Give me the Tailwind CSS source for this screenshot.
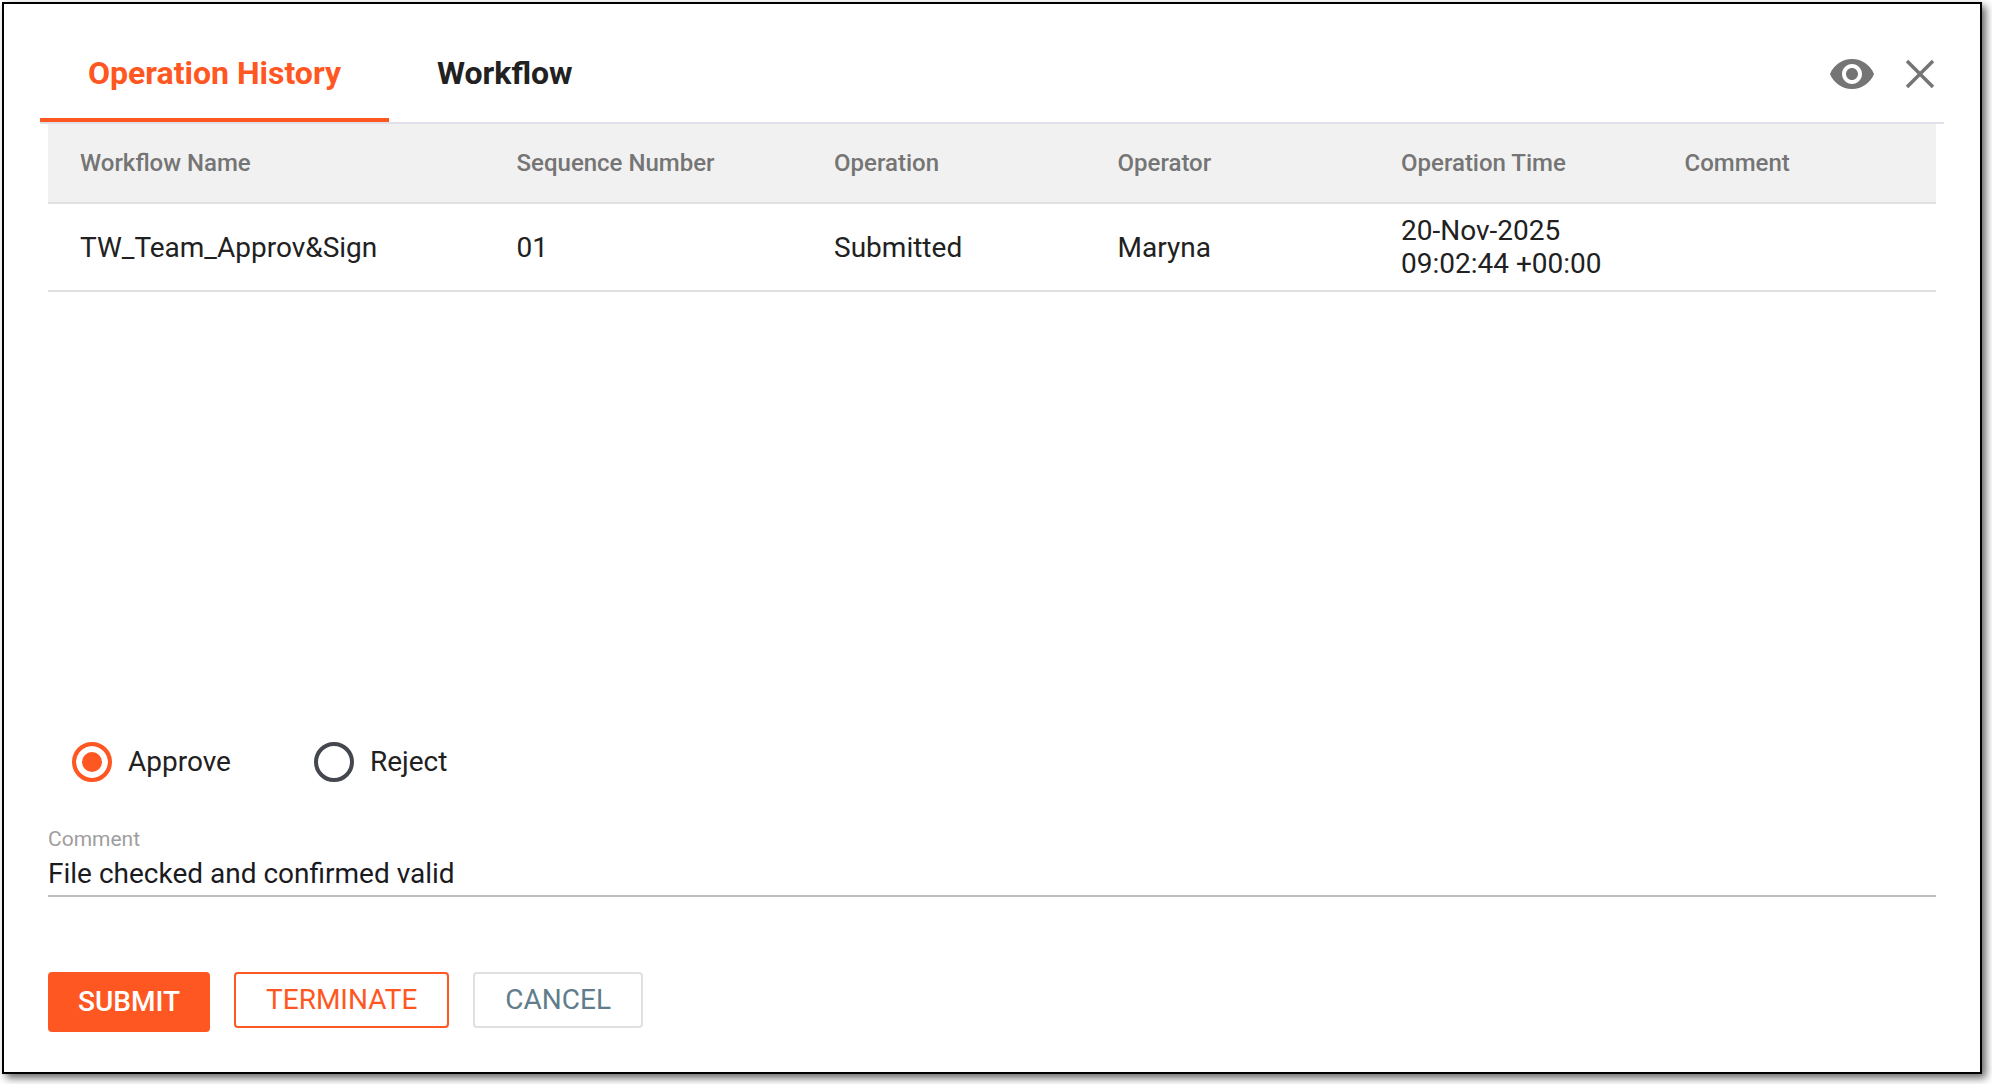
<!DOCTYPE html>
<html lang="en">
<head>
<meta charset="utf-8">
<meta name="viewport" content="width=device-width, initial-scale=1">
<title>Operation History</title>
<script src="https://cdn.jsdelivr.net/npm/@tailwindcss/browser@4"></script>
</head>
<body class="bg-white font-[Roboto,sans-serif] text-[#212121]">
<div class="flex min-h-screen flex-col pt-0.5 pr-2.5 pb-2.5 pl-0.5">
  <main class="flex flex-1 flex-col border-2 border-black bg-white px-9 pt-6 pb-10 shadow-[4px_4px_8px_rgba(0,0,0,0.6)]">
    <header class="flex items-stretch justify-between border-b-2 border-[#e0e0ea]">
      <nav role="tablist" class="flex">
        <button type="button" role="tab" aria-selected="true" class="h-[94px] border-b-4 border-[#ff5722] px-12 text-[32px] font-bold text-[#ff5722]">Operation History</button>
        <button type="button" role="tab" aria-selected="false" class="h-[94px] border-b-4 border-transparent px-12 text-[32px] font-bold">Workflow</button>
      </nav>
      <div class="flex items-center gap-7 pr-0.5 pb-0.5 text-[#757575]">
        <button type="button" aria-label="Preview">
          <svg class="size-12" viewBox="0 0 24 24" fill="currentColor"><path d="M12 4.5C7 4.500 2.730 7.610 1 12c1.730 4.390 6 7.500 11 7.500s9.270-3.110 11-7.500c-1.730-4.390-6-7.500-11-7.500zM12 17c-2.760 0-5-2.240-5-5s2.240-5 5-5 5 2.240 5 5-2.240 5-5 5zm0-8c-1.660 0-3 1.340-3 3s1.340 3 3 3 3-1.340 3-3-1.340-3-3-3z"/></svg>
        </button>
        <button type="button" aria-label="Close" class="pr-1.5">
          <svg class="size-8" viewBox="0 0 32 32" fill="none" stroke="currentColor" stroke-width="3.500"><path d="M3 3l26 26M29 3l-26 26"/></svg>
        </button>
      </div>
    </header>

    <section class="flex flex-1 flex-col px-2">
      <table class="w-full table-fixed text-left">
        <colgroup>
          <col class="w-[23.1%]"><col class="w-[16.8%]"><col class="w-[15%]"><col class="w-[15%]"><col class="w-[15%]"><col class="w-[15%]">
        </colgroup>
        <thead>
          <tr class="h-[79px] border-b-2 border-[#e0e0e0] bg-[#f1f1f1] text-2xl text-[#757575]">
            <th scope="col" class="pl-8 font-medium">Workflow Name</th>
            <th scope="col" class="pl-8 font-medium">Sequence Number</th>
            <th scope="col" class="pl-8 font-medium">Operation</th>
            <th scope="col" class="pl-8 font-medium">Operator</th>
            <th scope="col" class="pl-8 font-medium">Operation Time</th>
            <th scope="col" class="pl-8 font-medium">Comment</th>
          </tr>
        </thead>
        <tbody>
          <tr class="h-[88px] border-b-2 border-[#e0e0e0] text-[28px] leading-[33px]">
            <td class="pl-8">TW_Team_Approv&amp;Sign</td>
            <td class="pl-8">01</td>
            <td class="pl-8">Submitted</td>
            <td class="pl-8">Maryna</td>
            <td class="pl-8">20-Nov-2025<br>09:02:44&nbsp;+00:00</td>
            <td class="pl-8"></td>
          </tr>
        </tbody>
      </table>

      <form class="mt-auto">
        <fieldset aria-label="Decision" class="flex gap-[83px] pl-6 text-[28px] leading-10">
          <label class="flex items-center gap-4"><input type="radio" name="decision" checked class="size-10 appearance-none rounded-full border-4 border-[#44474e] checked:border-[#ff5722] checked:bg-[#ff5722] checked:shadow-[inset_0_0_0_6px_white]">Approve</label>
          <label class="flex items-center gap-4"><input type="radio" name="decision" class="size-10 appearance-none rounded-full border-4 border-[#44474e] checked:border-[#ff5722] checked:bg-[#ff5722] checked:shadow-[inset_0_0_0_6px_white]">Reject</label>
        </fieldset>
        <div class="mt-[45px] flex flex-col border-b-2 border-[#bdbdbd]">
          <label for="comment" class="text-[21px] leading-6 text-[#9e9e9e]">Comment</label>
          <input id="comment" type="text" value="File checked and confirmed valid" class="h-11 w-full text-[28px] text-[#1b1b1f] outline-none">
        </div>
        <div class="mt-[75px] flex items-start gap-6 text-[28px]">
          <button type="submit" class="h-[60px] rounded-sm bg-[#ff5722] px-[30px] font-medium text-white">SUBMIT</button>
          <button type="button" class="h-14 rounded-sm border-2 border-[#ff5722] px-[30px] text-[#ff5722]">TERMINATE</button>
          <button type="button" class="h-14 rounded-sm border-2 border-[#e0e0e0] px-[30px] text-[#607d8b]">CANCEL</button>
        </div>
      </form>
    </section>
  </main>
</div>
</body>
</html>
